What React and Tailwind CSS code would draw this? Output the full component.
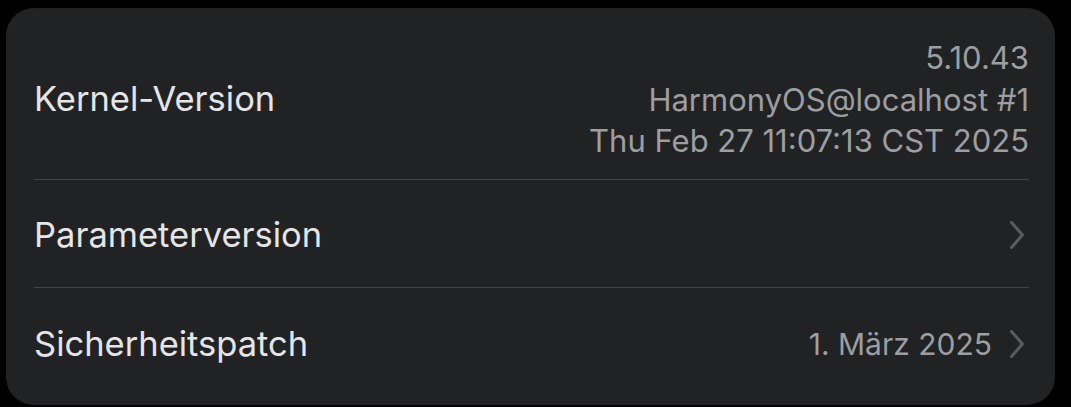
import React from 'react'

function Chevron() {
  return (
    <svg width="16" height="30" viewBox="0 0 16 30" className="shrink-0">
      <path d="M2.5 2.5 L13.5 15 L2.5 27.5" fill="none" stroke="#5a5b5d" strokeWidth="3" strokeLinecap="round" strokeLinejoin="round" />
    </svg>
  )
}

export default function App() {
  const font = { fontFamily: 'Inter, "Noto Sans", sans-serif' }
  return (
    <div className="w-[1071px] h-[407px] bg-black pt-[8px] pl-[6px]" style={font}>
      <div className="w-[1049px] h-[397px] bg-[#212224] rounded-[28px] pl-[28px] pr-[26px] flex flex-col">
        <div className="h-[172px] pt-[12px] flex items-center justify-between border-b border-[#424345]">
          <span className="text-[34.5px] text-[#e5e5e7] leading-none">Kernel-Version</span>
          <div className="flex flex-col items-end text-[31px] leading-[41.5px] text-[#9d9ea0]">
            <span>5.10.43</span>
            <span>HarmonyOS@localhost #1</span>
            <span>Thu Feb 27 11:07:13 CST 2025</span>
          </div>
        </div>
        <div className="h-[108px] pt-[3px] flex items-center justify-between border-b border-[#424345]">
          <span className="text-[34.5px] text-[#e5e5e7] leading-none">Parameterversion</span>
          <div className="mr-[4px]"><Chevron /></div>
        </div>
        <div className="h-[112px] flex items-center justify-between">
          <span className="text-[34.5px] text-[#e5e5e7] leading-none">Sicherheitspatch</span>
          <div className="flex items-center gap-[17px] mr-[4px]">
            <span className="text-[30px] text-[#9d9ea0] leading-none">1. März 2025</span>
            <Chevron />
          </div>
        </div>
      </div>
    </div>
  )
}
